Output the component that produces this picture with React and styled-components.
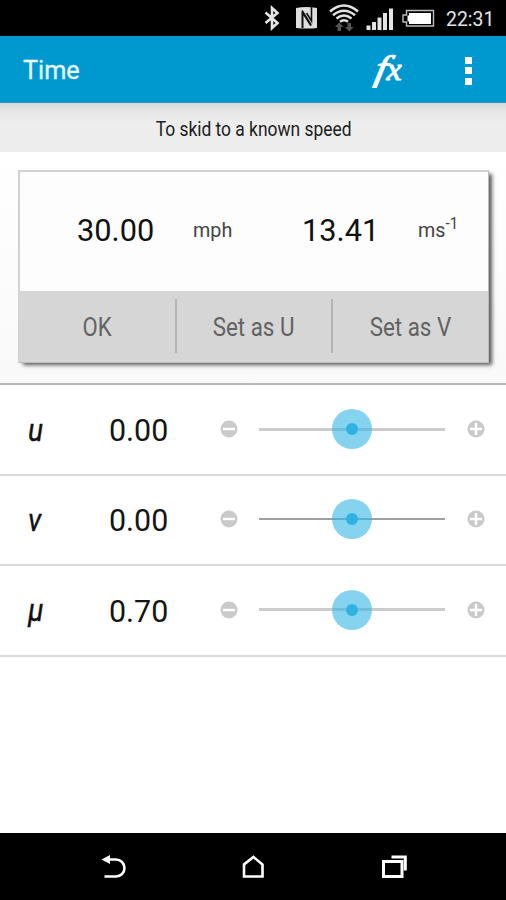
import React from 'react';
import styled, { createGlobalStyle } from 'styled-components';

const GlobalStyle = createGlobalStyle`
  * { box-sizing: border-box; }
  body { margin: 0; background: #fff; font-family: Roboto, "Liberation Sans", sans-serif; }
  button { font: inherit; border: 0; padding: 0; background: none; }
`;

const Screen = styled.div`
  display: flex;
  flex-direction: column;
  width: 506px;
  height: 900px;
  overflow: hidden;
  background: #fff;
`;

const Label = styled.span`
  display: block;
  white-space: nowrap;
  line-height: 1;
  transform: scaleX(${(p) => p.$stretch || 1});
  transform-origin: ${(p) => p.$origin || 'left'} center;
`;

const StatusBar = styled.header`
  display: flex;
  flex: none;
  height: 36px;
  background: #000;
  justify-content: flex-end;
  padding-right: 12px;
`;

const StatusIcons = styled.svg`
  display: block;
  width: 182px;
  height: 36px;
  margin-right: 10px;
`;

const Clock = styled(Label)`
  width: 48px;
  padding-top: 9px;
  font-size: 20px;
  color: #e4e4e4;
`;

const AppBar = styled.div`
  display: flex;
  flex: none;
  height: 67px;
  align-items: center;
  padding: 0 34px 0 23px;
  background: #0099cf;
  border-bottom: 1px solid #2f97bd;
`;

const Title = styled(Label)`
  flex: 1;
  font-size: 26px;
  font-weight: 400;
  color: #e8f8ff;
  -webkit-text-stroke: 0.3px #e8f8ff;
  padding-top: 2px;
`;

const FunctionButton = styled.button`
  width: 34px;
  height: 44px;
  margin-right: 61px;
  display: flex;
`;

const Overflow = styled.button`
  display: flex;
  flex-direction: column;
  gap: 3.5px;
  margin-top: 3px;
`;

const OverflowDot = styled.i`
  width: 7px;
  height: 7px;
  background: #fff;
`;

const Subtitle = styled.div`
  display: flex;
  flex: none;
  height: 49px;
  justify-content: center;
  padding: 16px 0 0 2px;
  font-size: 20px;
  color: #1c1c1c;
  background: linear-gradient(#d8d8d8, #e6e6e6 8px, #ededed 20px);
`;

const CardArea = styled.section`
  flex: none;
  height: 233.4px;
  padding: 18px 17px 0 18px;
  background: linear-gradient(#fff, #f9f9f9);
  border-bottom: 2px solid #b9b9b9;
`;

const Card = styled.div`
  height: 192.5px;
  border: 2px solid #d2d2d2;
  border-bottom: 1px solid #bdbdbd;
  border-right: 1px solid #bbb;
  background: #fdfdfd;
  box-shadow: 4px 3px 4px -1px rgba(0, 0, 0, 0.65);
`;

const Readings = styled.div`
  display: grid;
  grid-template-columns: 116px 109px 116px 1fr;
  height: 119px;
  padding: 42px 0 0 57px;
`;

const Reading = styled(Label)`
  font-size: 32px;
  color: #111;
`;

const Unit = styled(Label)`
  padding-top: 6px;
  font-size: 21px;
  font-weight: 400;
  color: #444;
`;

const Exponent = styled.sup`
  font-size: 16px;
  line-height: 0;
  vertical-align: 8px;
`;

const Actions = styled.div`
  display: grid;
  grid-template-columns: 156px 156px 156px;
  height: 70.5px;
  padding: 8px 0 9px;
  margin-left: -1px;
  background: #d6d6d6;
`;

const Action = styled.button`
  display: flex;
  align-items: center;
  justify-content: center;
  padding-top: 2px;
  font-size: 26px;
  color: #626262;
  & + & { border-left: 2px solid #b5b5b5; }
`;

const Row = styled.div`
  display: grid;
  flex: none;
  grid-template-columns: 81px 110.5px 28.5px 11px 186px 22px 18px;
  align-items: center;
  height: 90.4px;
  padding-left: 28px;
  padding-bottom: 1px;
  border-bottom: 2px solid #dadada;
`;

const Variable = styled(Label)`
  font-size: 32px;
  font-style: italic;
  color: #111;
  padding-top: 1px;
  -webkit-text-stroke: 0.4px #111;
`;

const Amount = styled(Label)`
  font-size: 32px;
  color: #151515;
  padding-top: 2px;
`;

const StepButton = styled.button`
  width: 18px;
  height: 18px;
  display: flex;
`;

const Track = styled.div`
  display: grid;
  place-items: center;
  height: 40px;
  background: linear-gradient(${(p) => (p.$fine ? '#9f9f9f' : '#cbcbcb')}, ${(p) => (p.$fine ? '#9f9f9f' : '#cbcbcb')})
    center / 100% ${(p) => (p.$fine ? '2px' : '3px')} no-repeat;
`;

const Thumb = styled.div`
  display: grid;
  place-items: center;
  width: 40px;
  height: 40px;
  border-radius: 50%;
  background: rgba(51, 181, 229, 0.6);
`;

const ThumbCore = styled.div`
  width: 12px;
  height: 12px;
  border-radius: 50%;
  background: #2fb1e4;
`;

const NavBar = styled.nav`
  display: flex;
  flex: none;
  height: 67px;
  margin-top: auto;
  padding: 20px 98px 0 100px;
  justify-content: space-between;
  background: #000;
`;

const NavIcon = styled.svg`
  display: block;
  width: 28px;
  height: 28px;
  fill: none;
  stroke: #fff;
  stroke-width: 2.6;
`;

const FxGlyph = styled.svg`
  width: 34px;
  height: 44px;
  overflow: visible;
  fill: #fff;
  stroke: #fff;
  stroke-width: 1;
  font-family: "Liberation Serif", serif;
  font-style: italic;
`;

const StatusGlyphs = () => (
  <StatusIcons viewBox="254 0 182 36" fill="none">
    <path d="M265.500 12.500l12 10.500-5.500 5V8l5.500 5-12 10" stroke="#e6e6e6" strokeWidth="2.600" />
    <path d="M296 8q10-2 21 0v20q-10 1-21 0z" fill="#dedede" />
    <path d="M301.500 12v16h2V15.500l6 9.500q1 1.500 2 .500V24L303 10.500q-1.500-1-1.500 1.500z" fill="#111" />
    <path d="M311.500 7v14l-5-8" stroke="#111" strokeWidth="1.600" />
    <g stroke="#e2e2e2" strokeWidth="2.500">
      <path d="M330 11.500q14-12 28 0" />
      <path d="M333 15.200q11-9 22 0" />
      <path d="M336.500 18.500q7.500-6 15 0" />
      <path d="M340 21.700q4-3 8 0" />
    </g>
    <path d="M335 27l4.300-4.500 4.300 4.500h-2.600v4h-3.400v-4zM345 27l4.300 4.500 4.300-4.500h-2.600v-4h-3.400v4z" fill="#555" />
    <path d="M366.500 25.500h4v4.500h-4zM372 22h4v8h-4zM377.500 17.500h4V30h-4zM383 13h4v17h-4zM389 8.500h4V30h-4z" fill="#e4e4e4" />
    <path d="M406.500 10.500h27v15.500h-27v-4h-3.500v-7h3.500z" stroke="#bcbcbc" strokeWidth="1.400" />
    <path d="M409 13h22v11h-22v-2.500h-1.500v-6h1.500z" fill="#fff" />
  </StatusIcons>
);

const StepIcon = ({ plus }) => (
  <svg width="18" height="18" viewBox="0 0 18 18">
    <circle cx="9" cy="9" r="8.500" fill="#cacaca" />
    <path d={plus ? 'M3 9h12M9 3v12' : 'M3 9h12'} stroke="#fff" strokeWidth="2.400" />
  </svg>
);

const rows = [
  { name: 'u', value: '0.00' },
  { name: 'v', value: '0.00', fine: true },
  { name: 'μ', value: '0.70' },
];

const actions = [
  { text: 'OK', stretch: 0.85 },
  { text: 'Set as U', stretch: 0.86 },
  { text: 'Set as V', stretch: 0.86 },
];

export default function App() {
  return (
    <Screen>
      <GlobalStyle />
      <StatusBar>
        <StatusGlyphs />
        <Clock $stretch={0.97}>22:31</Clock>
      </StatusBar>
      <AppBar>
        <Title $stretch={0.97}>Time</Title>
        <FunctionButton aria-label="Function">
          <FxGlyph viewBox="0 0 34 44">
            <text transform="translate(3.500 32.500) skewX(-11) scale(1.2 0.980)" fontSize="36">f</text>
            <text transform="translate(16.500 32.500) scale(1.060 1)" fontSize="32">x</text>
          </FxGlyph>
        </FunctionButton>
        <Overflow aria-label="More options">
          <OverflowDot />
          <OverflowDot />
          <OverflowDot />
        </Overflow>
      </AppBar>
      <Subtitle>
        <Label $stretch={0.87} $origin="center">To skid to a known speed</Label>
      </Subtitle>
      <CardArea>
        <Card>
          <Readings>
            <Reading $stretch={0.96}>30.00</Reading>
            <Unit $stretch={0.94}>mph</Unit>
            <Reading $stretch={0.96}>13.41</Reading>
            <Unit $stretch={0.94}>ms<Exponent>-1</Exponent></Unit>
          </Readings>
          <Actions>
            {actions.map((a) => (
              <Action key={a.text}>
                <Label $stretch={a.stretch} $origin="center">{a.text}</Label>
              </Action>
            ))}
          </Actions>
        </Card>
      </CardArea>
      {rows.map((r) => (
        <Row key={r.name}>
          <Variable $stretch={0.88}>{r.name}</Variable>
          <Amount $stretch={0.95}>{r.value}</Amount>
          <StepButton aria-label="Decrease"><StepIcon /></StepButton>
          <span />
          <Track $fine={r.fine}>
            <Thumb><ThumbCore /></Thumb>
          </Track>
          <span />
          <StepButton aria-label="Increase"><StepIcon plus /></StepButton>
        </Row>
      ))}
      <NavBar>
        <NavIcon viewBox="0 0 28 28">
          <path d="M4.500 23.500H16a8 8 0 0 0 0-17H7" />
          <path d="M1.500 6.500L10 2v9z" fill="#fff" stroke="none" />
        </NavIcon>
        <NavIcon viewBox="1 0 28 28">
          <path d="M5 23.500V11.500L14.500 4l9 7.500v12z" />
        </NavIcon>
        <NavIcon viewBox="0.500 0.500 28 28">
          <path d="M4 9h18.500v15H4z" strokeWidth="3" />
          <path d="M12 4.500h13.800v13.500" strokeWidth="3" />
        </NavIcon>
      </NavBar>
    </Screen>
  );
}
